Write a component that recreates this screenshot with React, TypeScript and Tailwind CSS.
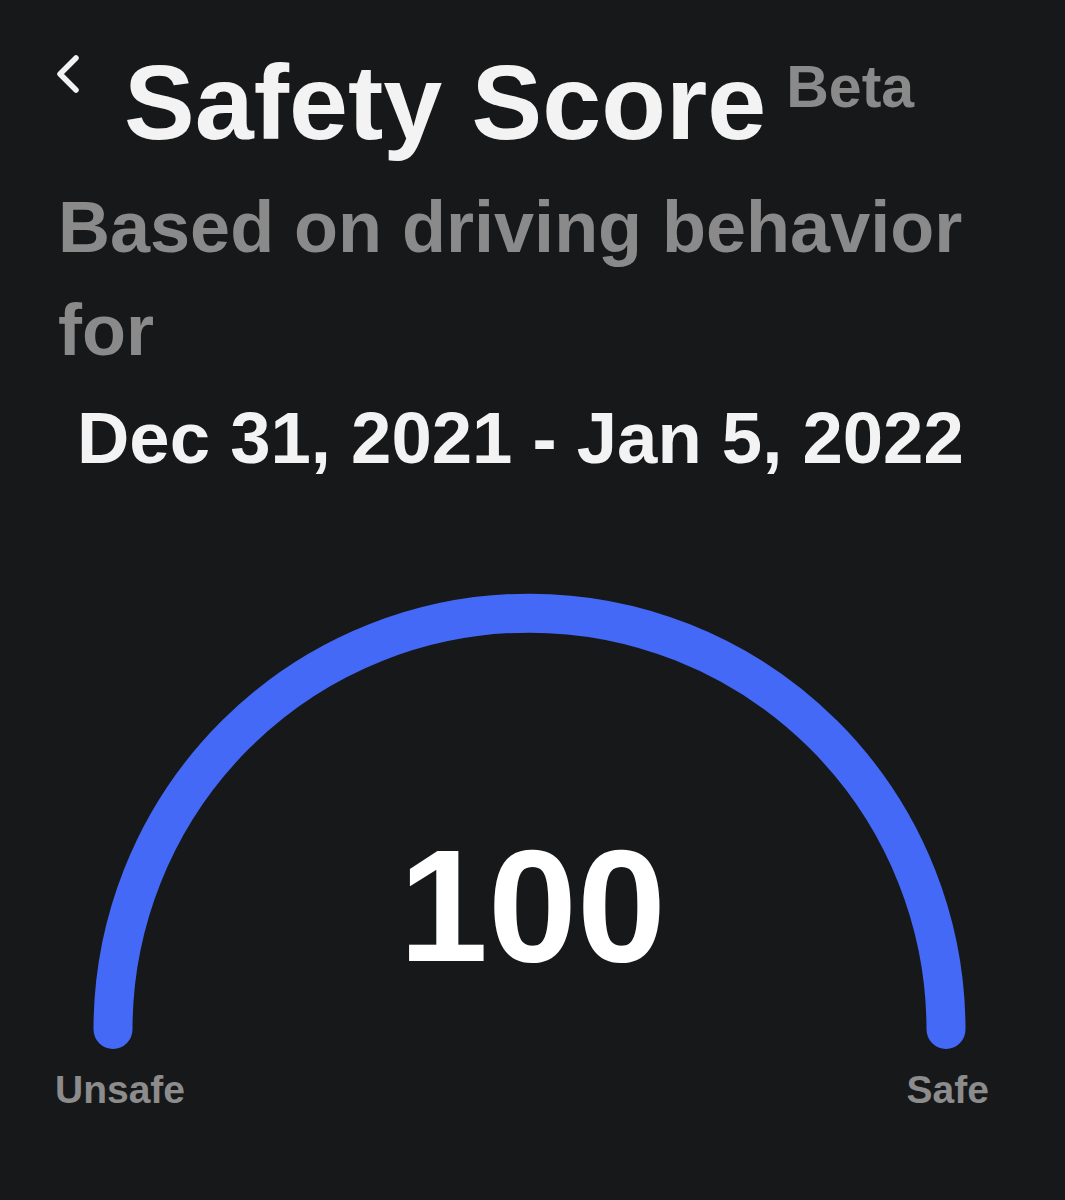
export default function App() {
  const cx = 529.5;
  const cy = 458.5;
  const r = 416.5;
  const d = `M ${cx - r} ${cy} A ${r} ${r} 0 0 1 ${cx + r} ${cy}`;
  return (
    <div
      className="w-[1065px] h-[1200px] bg-[#17181a] overflow-hidden"
      style={{ fontFamily: '"Liberation Sans", Arial, sans-serif' }}
    >
      <div className="flex items-start pt-[49px] pl-[56px]">
        <svg width="24" height="40" viewBox="0 0 24 40" className="mt-[5px] shrink-0">
          <path
            d="M20 4 L4 20 L20 36"
            fill="none"
            stroke="#f2f2f2"
            strokeWidth="5.5"
            strokeLinecap="round"
            strokeLinejoin="round"
          />
        </svg>
        <h1 className="ml-[44px] text-[106px] leading-none font-bold text-[#f3f3f3] whitespace-nowrap">
          Safety Score
        </h1>
        <span className="ml-[20px] mt-[9px] text-[59px] leading-none font-bold text-[#8a8a8a]">
          Beta
        </span>
      </div>

      <p className="mt-[21px] pl-[58px] pr-[30px] text-[72px] leading-[103px] font-bold text-[#8a8a8a]">
        Based on driving behavior for
      </p>

      <p className="mt-[20px] pl-[77px] text-[72.5px] leading-none font-bold text-[#f3f3f3] whitespace-nowrap">
        Dec 31, 2021 - Jan 5, 2022
      </p>

      <div className="relative mt-[96px]">
        <svg width="1065" height="480" viewBox="0 0 1065 480" className="block">
          <path d={d} fill="none" stroke="#4469f6" strokeWidth="39" strokeLinecap="round" />
        </svg>
        <div className="absolute left-0 right-0 top-[255px] text-center text-[160px] leading-none font-bold text-white">
          100
        </div>
      </div>

      <div className="mt-[19px] flex justify-between pl-[55px] pr-[76px] text-[39px] leading-none font-bold text-[#8c8c8c]">
        <span>Unsafe</span>
        <span>Safe</span>
      </div>
    </div>
  );
}
